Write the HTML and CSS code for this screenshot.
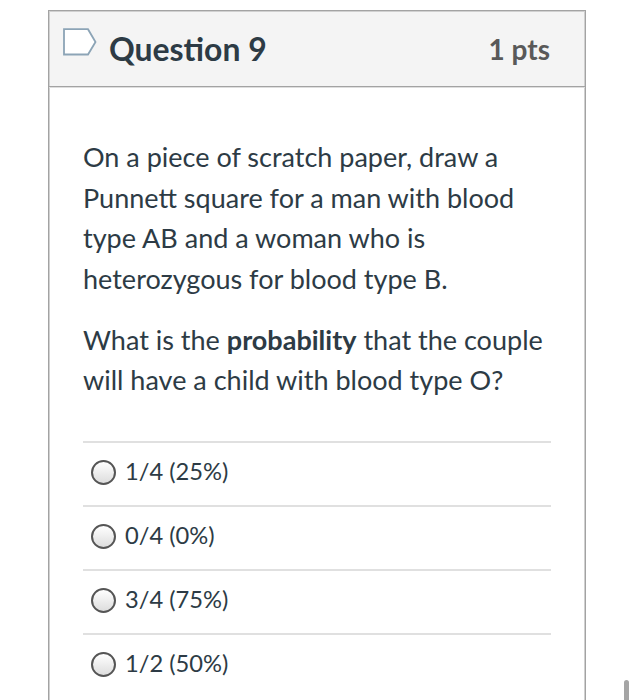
FILE: index.html
```html
<!DOCTYPE html>
<html lang="en">
<head>
<meta charset="utf-8">
<title>Question 9</title>
<link rel="stylesheet" href="styles.css">
</head>
<body>
<main class="question">
  <header class="header">
    <svg class="flag" width="36" height="30" viewBox="0 0 36 30"><path d="M1 1.2H25L32.5 14L25 26.5H1Z"/></svg>
    <h1 class="title">Question 9</h1>
    <span class="points">1 pts</span>
  </header>
  <div class="body">
    <p class="text"><span class="line">On a piece of scratch paper, draw a</span><span class="line">Punnett square for a man with blood</span><span class="line">type AB and a woman who is</span><span class="line">heterozygous for blood type B.</span></p>
    <p class="text"><span class="line">What is the <strong>probability</strong> that the couple</span><span class="line">will have a child with blood type O?</span></p>
    <div class="answers">
      <label class="answer"><input class="radio" type="radio" name="answer"><span class="label">1/4 (25%)</span></label>
      <label class="answer"><input class="radio" type="radio" name="answer"><span class="label">0/4 (0%)</span></label>
      <label class="answer"><input class="radio" type="radio" name="answer"><span class="label">3/4 (75%)</span></label>
      <label class="answer"><input class="radio" type="radio" name="answer"><span class="label">1/2 (50%)</span></label>
    </div>
  </div>
</main>
<div class="scrollbar"></div>
</body>
</html>
```
FILE: styles.css
```css
* { box-sizing: border-box; }
html, body { height: 700px; overflow: hidden; }
body { margin: 0; background: #fff; color: #2d3b45; font-family: Lato, sans-serif; }
.question { width: 538px; height: 720px; margin: 10px 0 0 48px; border: 1px solid #a3a3a3; box-shadow: inset 0 0 0 1px #d0d0d0; }
.header { display: flex; height: 76px; padding: 0 35px 0 14px; background: #f4f4f4; border-bottom: 1px solid #a3a3a3; box-shadow: inset 1px 1px #d0d0d0, inset -1px 0 #d0d0d0, 0 1px #dedede; }
.flag { margin-top: 17px; fill: #fff; stroke: #8ca4b6; stroke-width: 1.8; }
.title { margin: 18px 0 0 10px; font-size: 31.9px; line-height: 40px; font-weight: 700; white-space: nowrap; }
.points { margin: 18px 0 0 auto; color: #595959; font-size: 28px; line-height: 40px; font-weight: 700; }
.body { padding: 50.4px 34px 0; }
.text { margin: 0 0 20.3px; font-size: 27.03px; line-height: 40.5px; }
.line { display: block; white-space: nowrap; }
.answers { margin-top: 40px; }
.answer { display: flex; align-items: center; height: 64px; border-top: 2px solid #e0e0e0; padding-left: 8px; font-size: 23.7px; }
.label { margin-top: -6px; }
.radio { appearance: none; width: 25px; height: 25px; margin: -2px 9px 0 0; border: 2px solid #555; border-radius: 50%; background: linear-gradient(#fff, #ddd); }
.scrollbar { position: absolute; left: 624px; top: 680px; width: 5px; height: 24px; border-radius: 3px; background: #a5a5a5; }
```
